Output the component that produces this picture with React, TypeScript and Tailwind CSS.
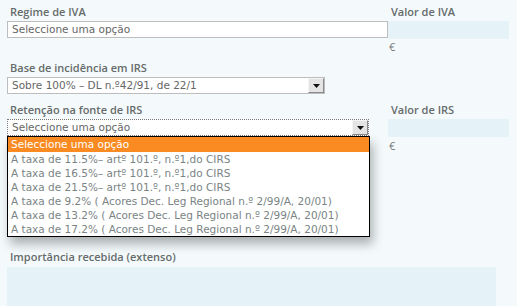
import { ReactNode } from "react";

const options = [
  "Seleccione uma opção",
  "A taxa de 11.5%– artº 101.º, n.º1,do CIRS",
  "A taxa de 16.5%– artº 101.º, n.º1,do CIRS",
  "A taxa de 21.5%– artº 101.º, n.º1,do CIRS",
  "A taxa de 9.2% ( Acores Dec. Leg Regional n.º 2/99/A, 20/01)",
  "A taxa de 13.2% ( Acores Dec. Leg Regional n.º 2/99/A, 20/01)",
  "A taxa de 17.2% ( Acores Dec. Leg Regional n.º 2/99/A, 20/01)",
];

function Label({ children }: { children: ReactNode }) {
  return (
    <div className="h-[16px] pl-[3px] text-[11px] leading-[16px] font-semibold text-[#666b6b]">
      {children}
    </div>
  );
}

function ArrowButton() {
  return (
    <div className="w-[16px] h-full flex items-center justify-center bg-[#e4e4e4] border-l border-t border-l-[#f4f4f4] border-t-[#f4f4f4] border-r border-b border-r-[#8a8a8a] border-b-[#8a8a8a]">
      <svg width="7" height="4" viewBox="0 0 7 4">
        <polygon points="0,0 7,0 3.5,4" fill="#111" />
      </svg>
    </div>
  );
}

export default function App() {
  return (
    <div className="w-[517px] h-[306px] overflow-hidden bg-[#f4fafc] font-['Open_Sans',sans-serif] text-[#666]">
      <div className="pl-[7px] pt-[4px]">
        {/* row 1 */}
        <div className="flex">
          <div className="w-[381px]">
            <Label>Regime de IVA</Label>
            <div className="mt-[1px] h-[17px] bg-white border border-[#bdbdbd] pl-[4px] font-['DejaVu_Sans',sans-serif] text-[10.5px] leading-[15px] text-[#666]">
              Seleccione uma opção
            </div>
          </div>
          <div className="w-[121px]">
            <Label>Valor de IVA</Label>
            <div className="mt-[1px] h-[18px] bg-[#e5f3f9]" />
            <div className="pl-[1px] mt-[1px] text-[11px] leading-[14px] text-[#777]">€</div>
          </div>
        </div>

        {/* row 2 */}
        <div className="mt-[6px]">
          <Label>Base de incidência em IRS</Label>
          <div className="mt-[1px] w-[318px] h-[17px] flex bg-white border border-[#bdbdbd] font-['DejaVu_Sans',sans-serif] text-[10.5px] leading-[15px] text-[#666]">
            <div className="flex-1 pl-[4px]">Sobre 100% – DL n.º42/91, de 22/1</div>
            <ArrowButton />
          </div>
        </div>

        {/* row 3 */}
        <div className="flex mt-[8px]">
          <div className="w-[381px] relative">
            <Label>Retenção na fonte de IRS</Label>
            <div className="mt-[1px] w-[362px] h-[17px] flex bg-white border border-dotted border-[#777] font-['DejaVu_Sans',sans-serif] text-[10.5px] leading-[15px] text-[#666]">
              <div className="flex-1 pl-[4px]">Seleccione uma opção</div>
              <ArrowButton />
            </div>
            <div className="absolute left-0 top-[34px] w-[363px] bg-white border border-black shadow-[3px_7px_10px_rgba(0,0,0,0.3)] font-['DejaVu_Sans',sans-serif] text-[10.5px] z-10">
              {options.map((o, i) => (
                <div
                  key={o}
                  className={
                    i === 0
                      ? "h-[15px] leading-[15px] pl-[3px] bg-[#f98b22] text-white"
                      : "h-[14px] leading-[14px] pl-[3px] text-[#7a8484] whitespace-nowrap"
                  }
                >
                  {o}
                </div>
              ))}
            </div>
          </div>
          <div className="w-[121px]">
            <Label>Valor de IRS</Label>
            <div className="mt-[1px] h-[18px] bg-[#e5f3f9]" />
            <div className="pl-[1px] mt-[2px] text-[11px] leading-[14px] text-[#777]">€</div>
          </div>
        </div>

        {/* row 4 */}
        <div className="mt-[96px]">
          <Label>Importância recebida (extenso)</Label>
          <div className="mt-[2px] w-[489px] h-[60px] bg-[#e5f3f9]" />
        </div>
      </div>
    </div>
  );
}
